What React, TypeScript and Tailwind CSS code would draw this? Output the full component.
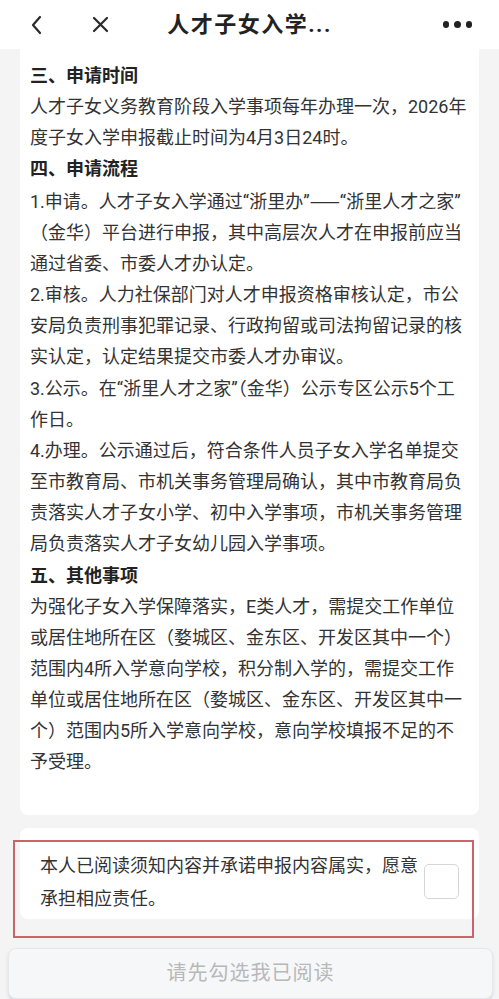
import React from "react";

type Line = { t: React.ReactNode; b?: boolean };

const Dash = () => (
  <span className="font-['Noto_Sans_CJK_SC',sans-serif]">——</span>
);

const lines: Line[] = [
  { t: "三、申请时间", b: true },
  { t: "人才子女义务教育阶段入学事项每年办理一次，2026年" },
  { t: "度子女入学申报截止时间为4月3日24时。" },
  { t: "四、申请流程", b: true },
  {
    t: (
      <>
        1.申请。人才子女入学通过“浙里办”
        <Dash />
        “浙里人才之家”
      </>
    ),
  },
  { t: "（金华）平台进行申报，其中高层次人才在申报前应当" },
  { t: "通过省委、市委人才办认定。" },
  { t: "2.审核。人力社保部门对人才申报资格审核认定，市公" },
  { t: "安局负责刑事犯罪记录、行政拘留或司法拘留记录的核" },
  { t: "实认定，认定结果提交市委人才办审议。" },
  { t: "3.公示。在“浙里人才之家”（金华）公示专区公示5个工" },
  { t: "作日。" },
  { t: "4.办理。公示通过后，符合条件人员子女入学名单提交" },
  { t: "至市教育局、市机关事务管理局确认，其中市教育局负" },
  { t: "责落实人才子女小学、初中入学事项，市机关事务管理" },
  { t: "局负责落实人才子女幼儿园入学事项。" },
  { t: "五、其他事项", b: true },
  { t: "为强化子女入学保障落实，E类人才，需提交工作单位" },
  { t: "或居住地所在区（婺城区、金东区、开发区其中一个）" },
  { t: "范围内4所入学意向学校，积分制入学的，需提交工作" },
  { t: "单位或居住地所在区（婺城区、金东区、开发区其中一" },
  { t: "个）范围内5所入学意向学校，意向学校填报不足的不" },
  { t: "予受理。" },
];

export default function App() {
  return (
    <div className="min-h-[999px] w-full bg-[#f4f4f4] font-['Roboto','Noto_Sans_CJK_SC',sans-serif]">
      {/* Header */}
      <div className="grid h-[49px] grid-cols-[1fr_auto_1fr] items-center bg-white">
        <div className="flex items-center pl-[30px]">
          <svg width="12" height="20" viewBox="0 0 12 20" fill="none">
            <polyline
              points="10,2 3,10 10,18"
              stroke="#2a2a2a"
              strokeWidth="2.2"
              strokeLinecap="round"
              strokeLinejoin="round"
            />
          </svg>
          <svg className="ml-[50px]" width="17" height="17" viewBox="0 0 17 17" fill="none">
            <path
              d="M2 2 L15 15 M15 2 L2 15"
              stroke="#2a2a2a"
              strokeWidth="2.2"
              strokeLinecap="round"
            />
          </svg>
        </div>
        <div className="text-[22px] font-bold tracking-[1.5px] text-[#222]">
          人才子女入学...
        </div>
        <div className="flex items-center justify-end gap-[5px] pr-[27px]">
          <span className="h-[6.5px] w-[6.5px] rounded-full bg-[#222]" />
          <span className="h-[6.5px] w-[6.5px] rounded-full bg-[#222]" />
          <span className="h-[6.5px] w-[6.5px] rounded-full bg-[#222]" />
        </div>
      </div>

      {/* Content card */}
      <div className="mx-[20px] rounded-b-[8px] bg-white px-[10px] pb-[37px] pt-[11px] text-[18px] leading-[31.15px] text-[#333]">
        {lines.map((l, i) => (
          <div
            key={i}
            className={
              l.b
                ? "whitespace-nowrap font-bold text-[#222]"
                : "whitespace-nowrap"
            }
          >
            {l.t}
          </div>
        ))}
      </div>

      {/* Agreement card */}
      <div className="relative mt-[13px]">
        <div className="mx-[20px] flex items-start rounded-[8px] bg-white pb-[4px] pl-[20px] pr-[20px] pt-[21px]">
          <div className="text-[18px] leading-[33px] text-[#333]">
            <div className="whitespace-nowrap">本人已阅读须知内容并承诺申报内容属实，愿意</div>
            <div className="whitespace-nowrap">承担相应责任。</div>
          </div>
          <div className="ml-auto mt-[15px] h-[35px] w-[35px] shrink-0 rounded-[5px] border border-[#d6d6d6] bg-white" />
        </div>
        <div className="pointer-events-none absolute left-[13px] top-[12px] h-[98px] w-[461px] border-2 border-[#c9646c]" />
      </div>

      {/* Bottom button */}
      <div className="ml-[8px] mt-[29px] flex h-[51px] w-[485px] items-center justify-center rounded-[8px] border border-[#e6e8ec] bg-[#f6f7f9] shadow-[0_2px_3px_rgba(180,195,215,0.5)]">
        <span className="text-[20px] tracking-[1px] text-[#b8b8b8]">请先勾选我已阅读</span>
      </div>
    </div>
  );
}
